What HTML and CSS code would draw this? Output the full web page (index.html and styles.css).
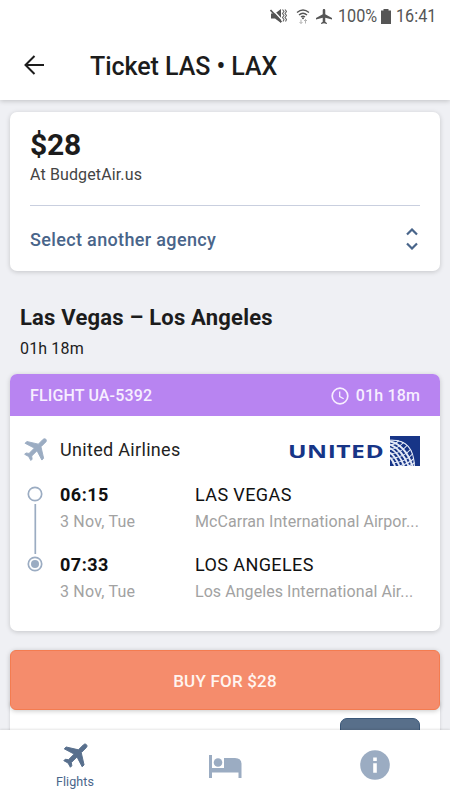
FILE: index.html
```html
<!DOCTYPE html>
<html lang="en">
<head>
<meta charset="utf-8">
<title>Ticket LAS • LAX</title>
<link rel="stylesheet" href="styles.css">
</head>
<body>
<div class="app">
  <header class="topbar">
    <div class="status">
      <svg class="i-mute" width="17" height="16" viewBox="0 0 17 16"><path d="M1 5.500h4l6-4.500v14l-6-4.500H1z" fill="#555"/><path d="M2 1l11 12" stroke="#fff" stroke-width="1.400"/><path d="M.5 2l11 12" stroke="#555" stroke-width="1.600"/><path d="M12.500 1.500l1.500 2-1.500 2 1.500 2-1.500 2 1.500 2-1 2M15 1.500l1.500 2-1.500 2 1.500 2-1.500 2 1.500 2-1 2" stroke="#666" stroke-width="1.100" fill="none"/></svg>
      <svg class="i-wifi" width="14" height="18" viewBox="0 0 14 18"><path d="M1 5.500q6-5 12 0M3 8q4-3.500 8 0M5 10q2-1.500 4 0" fill="none" stroke="#555" stroke-width="1.400"/><circle cx="7" cy="11.300" r="1" fill="#555"/><path d="M5 12.500v4m-1.500-1.500l1.500 1.500 1.500-1.500M9.500 16.500v-4m-1.500 1.500l1.500-1.500 1.500 1.500" fill="none" stroke="#aaa" stroke-width=".9"/></svg>
      <svg class="i-plane" width="16" height="15" viewBox="2 2 19 20" preserveAspectRatio="none"><path fill="#555" d="M21 16v-2l-8-5V3.500c0-.83-.67-1.500-1.500-1.500S10 2.670 10 3.500V9l-8 5v2l8-2.500V19l-2 1.500V22l3.500-1 3.500 1v-1.500L13 19v-5.500l8 2.500z"/></svg>
      <span class="pct">100%</span>
      <svg class="i-batt" width="10" height="15" viewBox="0 0 10 15"><path d="M2.500 0h5v1.500H10V15H0V1.500h2.500z" fill="#555"/></svg>
      <span class="time">16:41</span>
    </div>
    <div class="titlebar">
      <svg width="20" height="20" viewBox="0 0 20 20"><path d="M10.500 1L1.500 10l9 9M1.500 10H20" fill="none" stroke="#1c1c1c" stroke-width="2"/></svg>
      <h1>Ticket LAS • LAX</h1>
    </div>
  </header>

  <main class="content">
    <section class="card offer">
      <div class="price">$28</div>
      <div class="agency">At BudgetAir.us</div>
      <div class="select">
        <span>Select another agency</span>
        <svg width="12" height="22" viewBox="0 0 12 22"><path d="M1 6.500l5-5 5 5M1 15.500l5 5 5-5" fill="none" stroke="#49658a" stroke-width="2.200"/></svg>
      </div>
    </section>

    <h2>Las Vegas – Los Angeles</h2>
    <div class="total">01h 18m</div>

    <section class="card flight">
      <div class="flight-head">
        <span class="number">FLIGHT UA-5392</span>
        <svg width="18" height="18" viewBox="0 0 18 18"><circle cx="9" cy="9" r="7.800" fill="none" stroke="#f7efff" stroke-width="1.700"/><path d="M8.700 4.500v5l4 2.300" fill="none" stroke="#f7efff" stroke-width="1.300"/></svg>
        <span class="duration">01h 18m</span>
      </div>
      <div class="airline">
        <svg class="airplane" width="30" height="30" viewBox="0 0 24 24"><path transform="rotate(45 12 12)" fill="#9bacc2" stroke="#9bacc2" stroke-width=".7" stroke-linejoin="round" d="M21 15.500v-2l-8-5V3c0-.83-.67-1.500-1.500-1.500S10 2.170 10 3v5.500l-8 5v2l8-2.500V19l-2 1.500V22l3.500-1 3.500 1v-1.500L13 19v-6l8 2.500z"/></svg>
        <span class="airline-name">United Airlines</span>
        <svg class="logo" width="132" height="30" viewBox="0 0 132 30">
          <text transform="translate(0 21.500) scale(1.450 1)" x="0" y="0" textLength="66" class="logo-text">UNITED</text>
          <rect x="102" width="30" height="30" fill="#173587"/>
          <clipPath id="globe"><path d="M102 3.500Q126 2 127 30H102z"/></clipPath>
          <g clip-path="url(#globe)" fill="none" stroke="#e4eaf7">
            <path d="M102 4q24-1 24.500 26" stroke-width="1.500"/>
            <path d="M102 5.500q15 3 22.500 24.500M102 8.500q12 5 18.500 21.500M102 12q9 5 14 18M102 16.500q6 5 9.500 13.500M102 21.500q3 3 5 8.500" stroke-width="1.900"/>
            <path d="M102 9q5-.5 9-4.500M102 13.500q8-1 13.500-7M102 18q11-1 17-8.500M102 22.500q14-1 20.500-9M104 27q14-1 20.500-9M111 30q9-2 15-7.500M119 30.500q4-1 8-4" stroke-width="1.100"/>
          </g>
        </svg>
      </div>
      <div class="route">
        <svg class="track" width="16" height="86" viewBox="0 0 16 86"><g fill="none" stroke="#9bacc2" stroke-width="1.700"><circle cx="8" cy="8" r="6.700"/><path d="M8.300 18v50"/><circle cx="8" cy="78" r="6.700"/></g><circle cx="8" cy="78" r="4" fill="#9bacc2"/></svg>
        <div class="stop"><b>06:15</b><span class="date">3 Nov, Tue</span></div>
        <div class="stop"><span class="city">LAS VEGAS</span><span class="airport">McCarran International Airpor...</span></div>
        <div class="stop"><b>07:33</b><span class="date">3 Nov, Tue</span></div>
        <div class="stop"><span class="city">LOS ANGELES</span><span class="airport">Los Angeles International Air...</span></div>
      </div>
    </section>

    <div class="buy-area">
      <button class="buy">BUY FOR $28</button>
      <div class="next"><div class="next-button"></div></div>
    </div>
  </main>

  <nav class="tabs">
    <div class="tab active">
      <svg width="32" height="32" viewBox="0 0 24 24"><path transform="rotate(45 12 12)" fill="#586f8d" stroke="#586f8d" stroke-width=".7" stroke-linejoin="round" d="M21 15.500v-2l-8-5V3c0-.83-.67-1.500-1.500-1.500S10 2.170 10 3v5.500l-8 5v2l8-2.500V19l-2 1.500V22l3.500-1 3.500 1v-1.500L13 19v-6l8 2.500z"/></svg>
      <span>Flights</span>
    </div>
    <div class="tab">
      <svg class="bed" width="33" height="23" viewBox="0 0 33 23"><path fill="#9bacc2" d="M0 0h3v13h12V3h11q6.500 0 6.500 6v14h-3v-5.500H3V23H0z"/><circle cx="9" cy="7.500" r="4.300" fill="#9bacc2"/></svg>
    </div>
    <div class="tab">
      <svg class="info" width="30" height="30" viewBox="0 0 30 30"><circle cx="15" cy="15" r="14.800" fill="#9bacc2"/><path d="M13.200 7.500h3.600v3.500h-3.600zM13.200 13.300h3.600v9.500h-3.600z" fill="#fff"/></svg>
    </div>
  </nav>
</div>
</body>
</html>
```

FILE: styles.css
```css
* { box-sizing: border-box; }
body { margin: 0; font-family: Roboto, sans-serif; color: #1c1c1c; }
svg { display: block; flex: none; }
.app { width: 450px; height: 800px; display: flex; flex-direction: column; overflow: hidden; background: #eff0f4; }
.topbar { height: 100px; flex: none; background: #fff; box-shadow: 0 1px 5px rgba(0,0,0,.2); z-index: 1; }
.status { height: 32px; display: flex; align-items: center; padding-left: 270px; color: #555; font-size: 18px; line-height: 32px; white-space: nowrap; }
.i-wifi { margin-left: 9px; }
.i-plane { margin-left: 6px; }
.pct, .time { transform: scaleX(.9); transform-origin: left; }
.pct { width: 39px; margin-left: 6px; }
.i-batt { margin-left: 4px; }
.time { margin-left: 5px; }
.titlebar { display: flex; align-items: center; height: 66px; padding-left: 24px; }
h1 { margin: 3px 0 0 46px; font-size: 25px; line-height: 30px; font-weight: 500; letter-spacing: -.06px; }
.content { flex: 1; min-height: 0; overflow: hidden; padding: 12px 10px 0; }
.card { background: #fff; border-radius: 7px; box-shadow: 0 1px 5px rgba(0,0,0,.18); }
.offer { height: 159px; padding: 15px 20px 0; }
.price { font-size: 30px; line-height: 35px; font-weight: 700; letter-spacing: -.2px; }
.agency { margin-top: 3px; font-size: 16px; line-height: 20px; color: #444; letter-spacing: .13px; }
.select { margin-top: 20px; height: 67px; border-top: 1px solid #c9cfdf; display: flex; align-items: center; justify-content: space-between; font-size: 18px; font-weight: 500; letter-spacing: .35px; color: #49658a; padding-right: 2px; }
h2 { margin: 33px 10px 0; font-size: 22px; line-height: 28px; font-weight: 700; letter-spacing: .21px; }
.total { margin: 6px 10px 0; font-size: 16px; line-height: 22px; letter-spacing: .15px; }
.flight { margin-top: 14px; height: 257px; overflow: hidden; }
.flight-head { height: 42px; display: flex; align-items: center; padding: 1px 20px 0; background: #b884f1; color: #f7efff; font-size: 16px; font-weight: 500; }
.number { margin-right: auto; letter-spacing: .15px; }
.duration { margin-left: 7px; letter-spacing: .15px; }
.airline { height: 30px; margin: 20px 20px 0 10px; display: flex; align-items: center; }
.airplane { margin: -4px 0 0 2px; }
.airline-name { margin-left: 8px; font-size: 18px; line-height: 24px; letter-spacing: .32px; color: #222; margin-top: -3px; }
.logo { margin-left: auto; }
.logo-text { font-family: "Open Sans", sans-serif; font-size: 17px; font-weight: 700; fill: #173587; }
.route { display: grid; grid-template-columns: 33px 135px 1fr; grid-template-rows: 70px 70px; margin: 16px 20px 0 17px; }
.track { grid-row: 1 / 3; margin-top: 4px; }
.stop { display: flex; flex-direction: column; }
.stop b, .city { font-size: 18px; line-height: 26px; color: #111; }
.stop b { letter-spacing: .5px; }
.city { letter-spacing: .4px; }
.date, .airport { font-size: 16px; line-height: 27px; color: #a2a2a2; white-space: nowrap; }
.date { letter-spacing: .2px; }
.airport { letter-spacing: .06px; }
.buy-area { margin-top: 19px; }
.buy { display: block; width: 430px; height: 60px; border: 1px solid #f47c50; border-radius: 6px; background: #f58c6c; color: #fff5f0; font: 500 17px Roboto, sans-serif; letter-spacing: .2px; padding: 1px 0 0; box-shadow: 0 1px 5px rgba(0,0,0,.22); position: relative; }
.next { height: 40px; margin-top: -8px; padding: 16px 20px 0; background: #fff; box-shadow: 0 0 3px rgba(0,0,0,.15); }
.next-button { width: 80px; height: 30px; margin-left: auto; border: 1px solid #3b5778; border-radius: 7px; background: #586f8a; }
.tabs { height: 70px; flex: none; background: #fff; display: grid; grid-template-columns: repeat(3, 1fr); box-shadow: 0 -1px 2px rgba(0,0,0,.1); z-index: 1; }
.tab { display: flex; flex-direction: column; align-items: center; }
.active { padding-top: 9px; font-size: 12.5px; color: #49658a; }
.active svg { margin-left: 3px; }
.active span { line-height: 20px; margin-top: 1px; letter-spacing: .1px; }
.bed { margin-top: 25px; }
.info { margin-top: 20px; }
```
